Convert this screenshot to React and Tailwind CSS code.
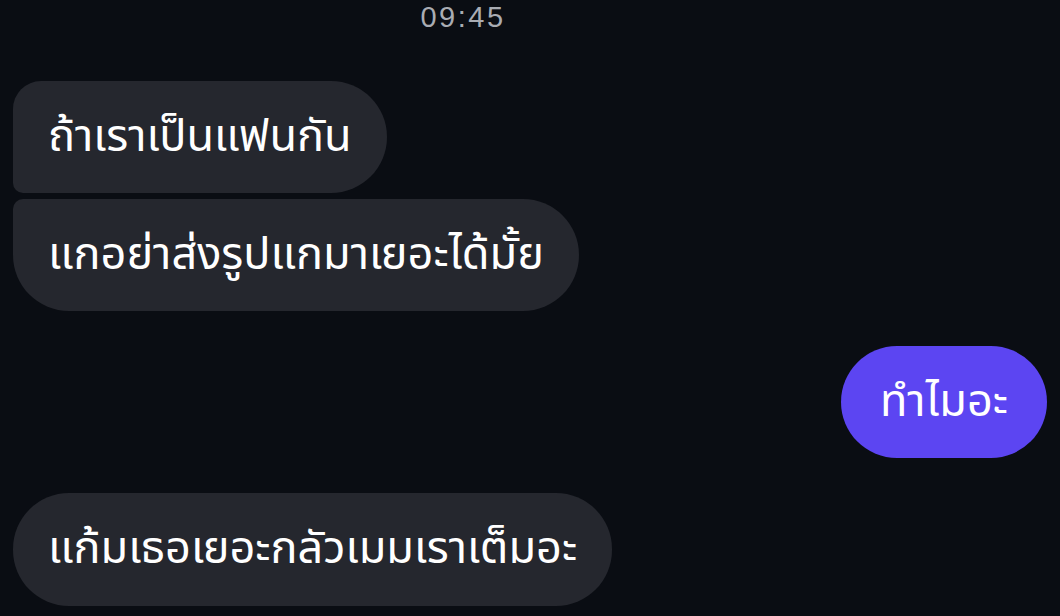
export default function App() {
  const font = { fontFamily: '"Noto Sans Thai", "Noto Sans", "DejaVu Sans", sans-serif' };
  return (
    <div className="w-[1060px] h-[616px] overflow-hidden bg-[#0a0d13] text-white" style={font}>
      <div className="flex flex-col px-[13px]">
        <div className="h-[34px] flex items-center justify-center pr-[134px] text-[29px] tracking-[2.5px] leading-none text-[#a9acb3] font-['Liberation_Sans',sans-serif]">
          09:45
        </div>
        <div className="mt-[47px] flex flex-col gap-[6px] items-start text-[45px] leading-none">
          <div className="h-[112px] flex items-center px-[35px] bg-[#25272e] rounded-[56px] rounded-tl-[28px] rounded-bl-[10px]">
            ถ้าเราเป็นแฟนกัน
          </div>
          <div className="h-[112px] flex items-center px-[35px] bg-[#25272e] rounded-[56px] rounded-tl-[10px]">
            แกอย่าส่งรูปแกมาเยอะได้มั้ย
          </div>
        </div>
        <div className="mt-[35px] flex justify-end text-[45px] leading-none">
          <div className="h-[112px] flex items-center px-[39px] bg-[#5c45f2] rounded-[56px]">
            ทำไมอะ
          </div>
        </div>
        <div className="mt-[35px] flex text-[45px] leading-none">
          <div className="h-[113px] flex items-center px-[35px] bg-[#25272e] rounded-[56px]">
            แก้มเธอเยอะกลัวเมมเราเต็มอะ
          </div>
        </div>
      </div>
    </div>
  );
}
